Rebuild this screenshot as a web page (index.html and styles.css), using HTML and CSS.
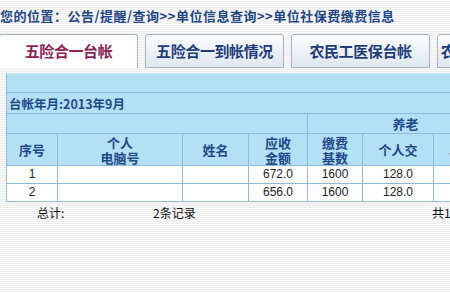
FILE: index.html
```html
<!DOCTYPE html>
<html lang="zh-CN">
<head>
    <meta charset="UTF-8">
    <title>单位社保费缴费信息</title>
    <link rel="stylesheet" href="styles.css">
</head>
<body>
    <div class="crumb">您的位置：公告/提醒/查询&gt;&gt;单位信息查询&gt;&gt;单位社保费缴费信息</div>

    <div class="tabs">
        <div class="tab active">五险合一台帐</div>
        <div class="tab">五险合一到帐情况</div>
        <div class="tab">农民工医保台帐</div>
        <div class="tab">农民工医保到帐情况</div>
    </div>

    <div class="board">
        <table class="ledger">
            <colgroup>
                <col class="c-no">
                <col class="c-id">
                <col class="c-name">
                <col class="c-due">
                <col class="c-base">
                <col class="c-own">
                <col class="c-unit">
                <col class="c-more">
            </colgroup>
            <tr class="blank"><td colspan="8"></td></tr>
            <tr class="period"><td colspan="8">台帐年月:2013年9月</td></tr>
            <tr class="group">
                <td colspan="4"></td>
                <td colspan="3">养老</td>
                <td></td>
            </tr>
            <tr class="head">
                <th>序号</th>
                <th>个人<br>电脑号</th>
                <th>姓名</th>
                <th>应收<br>金额</th>
                <th>缴费<br>基数</th>
                <th>个人交</th>
                <th>单位交</th>
                <th>缴费<br>基数</th>
            </tr>
            <tr class="row">
                <td>1</td><td></td><td></td><td>672.0</td><td>1600</td><td>128.0</td><td></td><td></td>
            </tr>
            <tr class="row">
                <td>2</td><td></td><td></td><td>656.0</td><td>1600</td><td>128.0</td><td></td><td></td>
            </tr>
        </table>

        <div class="total">
            <span class="label">总计:</span>
            <span class="count">2条记录</span>
            <span class="pages">共1页</span>
        </div>
    </div>
</body>
</html>
```

FILE: styles.css
```css
html {
    overflow: hidden;
}
body {
    margin: 0;
    width: 600px;
    height: 292px;
    font-family: "Noto Sans CJK SC", "Liberation Sans", sans-serif;
    background: repeating-linear-gradient(to bottom, #f9f9f9 0, #f9f9f9 1px, #eeeeee 1px, #eeeeee 2px);
}
.crumb {
    height: 34px;
    padding-top: 7px;
    box-sizing: border-box;
    font-size: 13px;
    font-weight: bold;
    color: #22468a;
    letter-spacing: 0.5px;
    line-height: 18px;
}
.tabs {
    display: flex;
    gap: 7px;
    height: 33px;
}
.tab {
    flex: none;
    width: 137px;
    height: 32px;
    border: 1px solid #a9b2bd;
    border-radius: 3px 3px 0 0;
    background: linear-gradient(to bottom, #fbfcfe, #dfe7f1);
    color: #1e3d7c;
    font-size: 15px;
    font-weight: bold;
    line-height: 32px;
    text-align: center;
    letter-spacing: -0.4px;
}
.tab.active {
    margin-left: -1px;
    background: #ffffff;
    border-bottom: none;
    height: 33px;
    color: #8e2456;
}
.board {
    margin: 6px 0 0 6px;
}
.ledger {
    border-collapse: collapse;
    table-layout: fixed;
    width: 567px;
    font-size: 12px;
}
.c-no { width: 51px; }
.c-id { width: 125px; }
.c-name { width: 66px; }
.c-due { width: 59px; }
.c-base { width: 55px; }
.c-own { width: 71px; }
.c-unit { width: 70px; }
.c-more { width: 70px; }
.ledger td, .ledger th {
    border: 1px solid #8dbbd9;
    padding: 0;
    text-align: center;
}
.blank td {
    height: 18px;
    background: #b4e0f6;
    border-top-color: #c8e4f2;
}
.period td {
    height: 20px;
    background: #b4e0f6;
    text-align: left;
    padding-left: 2px;
    font-size: 12.5px;
    font-weight: bold;
    color: #1f4a8a;
}
.group td {
    height: 18px;
    background: #b4e0f6;
    font-size: 13px;
    font-weight: bold;
    color: #1f4a8a;
}
.head th {
    height: 31px;
    background: #b4e0f6;
    font-size: 13px;
    font-weight: bold;
    line-height: 15px;
    color: #1f4a8a;
}
.row td {
    height: 17px;
    background: #ffffff;
    font-family: "Liberation Sans", Arial, sans-serif;
    color: #222222;
    line-height: 17px;
}
.total {
    display: flex;
    height: 16px;
    margin-top: 3px;
    font-size: 12px;
    line-height: 16px;
    color: #111111;
}
.total .label {
    width: 116px;
    padding-left: 31px;
}
.total .count {
    width: 279px;
}
```
